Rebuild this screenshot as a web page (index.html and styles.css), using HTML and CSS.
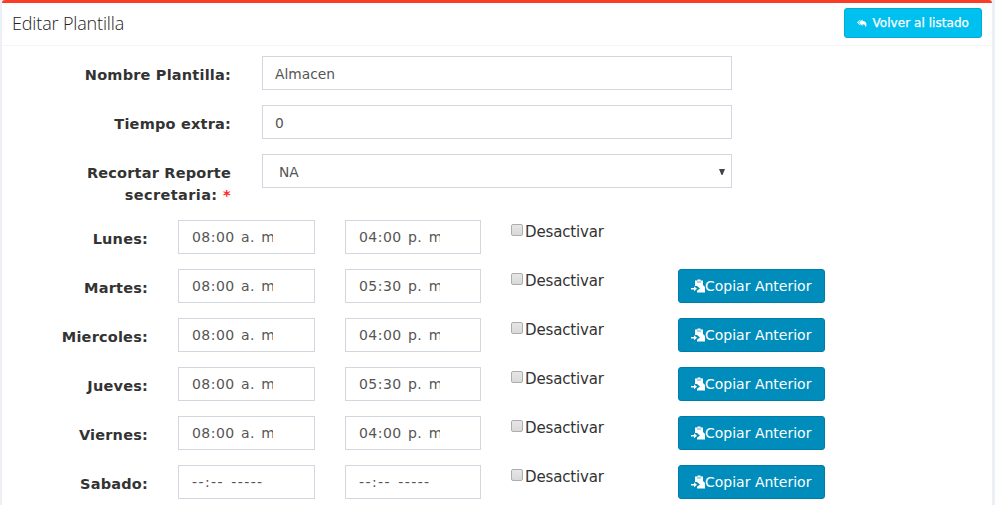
FILE: index.html
```
<!DOCTYPE html>
<html lang="es">
<head>
<meta charset="utf-8">
<title>Editar Plantilla</title>
<link rel="stylesheet" href="styles.css">
</head>
<body>
<svg width="0" height="0" class="defs">
  <symbol id="paste" viewBox="0 0 14 14">
    <path fill="currentColor" d="M4 1.500h2.500V.5h3v1H12v4.500l2 2v5.500H6v-1.700L9 9.500 6 7H4z"/>
    <path fill="currentColor" d="M0 9h3V7.300l3 2.400-3 2.500v-1.700H0z"/>
    <path fill="none" stroke="#008dbc" stroke-width=".7" d="M6 3h4"/>
  </symbol>
</svg>
<main class="panel">
  <header class="panel-head">
    <h1 class="title">Editar Plantilla</h1>
    <button class="btn back"><svg class="reply" viewBox="0 0 14 12"><path fill="currentColor" d="M5 0v1.600L1.800 4.500 5 7.400V9L0 4.500zM8.200 0v2.200C12 2.200 14 4.600 14 7.500c0 1.600-.6 3.200-1.700 4.500.5-3-.6-5-4.100-5v2.500L3 4.700z"/></svg><span>Volver al listado</span></button>
  </header>
  <form class="form">
    <div class="row general"><div class="label">Nombre Plantilla:</div><div class="field">Almacen</div></div>
    <div class="row general"><div class="label">Tiempo extra:</div><div class="field">0</div></div>
    <div class="row general tall"><div class="label">Recortar Reporte<br><span class="second">secretaria: <i class="req">*</i></span></div><div class="field select">NA<svg class="arrow" viewBox="0 0 6 6"><path fill="#444" d="M0 0h6L3.500 6h-1z"/></svg></div></div>
    <div class="row day"><div class="label">Lunes:</div><div class="field time"><span>08:00 a. m.</span></div><div class="field time"><span>04:00 p. m.</span></div><div class="check"><i class="box"></i>Desactivar</div></div>
    <div class="row day"><div class="label">Martes:</div><div class="field time"><span>08:00 a. m.</span></div><div class="field time"><span>05:30 p. m.</span></div><div class="check"><i class="box"></i>Desactivar</div><button type="button" class="btn copy"><svg class="ico"><use href="#paste"/></svg><span>Copiar Anterior</span></button></div>
    <div class="row day"><div class="label">Miercoles:</div><div class="field time"><span>08:00 a. m.</span></div><div class="field time"><span>04:00 p. m.</span></div><div class="check"><i class="box"></i>Desactivar</div><button type="button" class="btn copy"><svg class="ico"><use href="#paste"/></svg><span>Copiar Anterior</span></button></div>
    <div class="row day"><div class="label">Jueves:</div><div class="field time"><span>08:00 a. m.</span></div><div class="field time"><span>05:30 p. m.</span></div><div class="check"><i class="box"></i>Desactivar</div><button type="button" class="btn copy"><svg class="ico"><use href="#paste"/></svg><span>Copiar Anterior</span></button></div>
    <div class="row day"><div class="label">Viernes:</div><div class="field time"><span>08:00 a. m.</span></div><div class="field time"><span>04:00 p. m.</span></div><div class="check"><i class="box"></i>Desactivar</div><button type="button" class="btn copy"><svg class="ico"><use href="#paste"/></svg><span>Copiar Anterior</span></button></div>
    <div class="row day"><div class="label">Sabado:</div><div class="field time blank"><span>--:-- -----</span></div><div class="field time blank"><span>--:-- -----</span></div><div class="check"><i class="box"></i>Desactivar</div><button type="button" class="btn copy"><svg class="ico"><use href="#paste"/></svg><span>Copiar Anterior</span></button></div>
  </form>
</main>
</body>
</html>
```
FILE: styles.css
```
* { box-sizing: border-box; }
body {
  margin: 0;
  height: 505px;
  overflow: hidden;
  background: #ecf0f5;
  font: 15px/22px "DejaVu Sans", Verdana, sans-serif;
  color: #333;
}
.defs { display: block; }
.panel {
  margin: 0 3px 0 2px;
  height: 505px;
  background: #fff;
  border-top: 3px solid #fb3c27;
  border-radius: 3px 3px 0 0;
}
.panel-head {
  display: flex;
  justify-content: space-between;
  height: 43px;
  padding: 5px 10px 0;
  border-bottom: 1px solid #f4f4f4;
}
.title {
  margin: 0;
  padding-top: 4px;
  font: 300 18px/22px "Open Sans", "Noto Sans", sans-serif;
  color: #222;
  letter-spacing: -0.15px;
}
.btn {
  display: flex;
  align-items: center;
  border: 1px solid;
  border-radius: 3px;
  padding: 0 12px;
  color: #fff;
  font-family: inherit;
  white-space: nowrap;
}
.back {
  width: 138px;
  height: 30px;
  background: #00c0ef;
  border-color: #00acd6;
  font-size: 12px;
  -webkit-text-stroke: 0.25px #fff;
}
.back span { letter-spacing: 0.05px; }
.reply { width: 13px; height: 11px; margin-right: 6px; }
.form { padding-top: 10px; }
.row { display: grid; height: 49px; align-items: start; }
.general { grid-template-columns: 229px 470px; column-gap: 31px; }
.tall { height: 66px; }
.day { grid-template-columns: 146px 137px 136px 137px 147px; column-gap: 30px; }
.label {
  padding-top: 8px;
  text-align: right;
  font-size: 14.5px;
  font-weight: 700;
  letter-spacing: 0.2px;
}
.second { letter-spacing: 0.4px; }
.req { color: #f22; font-style: normal; }
.field {
  height: 34px;
  padding: 6px 12px;
  border: 1px solid #d2d6de;
  font-size: 13.800px;
  line-height: 22px;
  color: #555;
}
.select {
  display: flex;
  justify-content: space-between;
  align-items: center;
  padding: 2px 6px 0 16px;
}
.arrow { width: 6px; height: 6px; }
.time {
  padding: 5px 12px 0 13px;
  font-size: 14px;
}
.time span {
  display: block;
  width: 81px;
  overflow: hidden;
  white-space: nowrap;
  letter-spacing: 0.45px;
  word-spacing: 1.500px;
}
.time.blank span { letter-spacing: 1.400px; }
.check { display: flex; padding-top: 1px; letter-spacing: -0.15px; }
.box {
  width: 12px;
  height: 12px;
  margin: 3px 2px 0 0;
  border: 1px solid #adadad;
  border-radius: 2px;
  background: linear-gradient(#e6e6e6, #d9d9d9);
}
.copy {
  width: 147px;
  height: 34px;
  background: #008dbc;
  border-color: #007ca8;
  font-size: 14px;
}
.ico { width: 14px; height: 14px; flex: none; }
```
